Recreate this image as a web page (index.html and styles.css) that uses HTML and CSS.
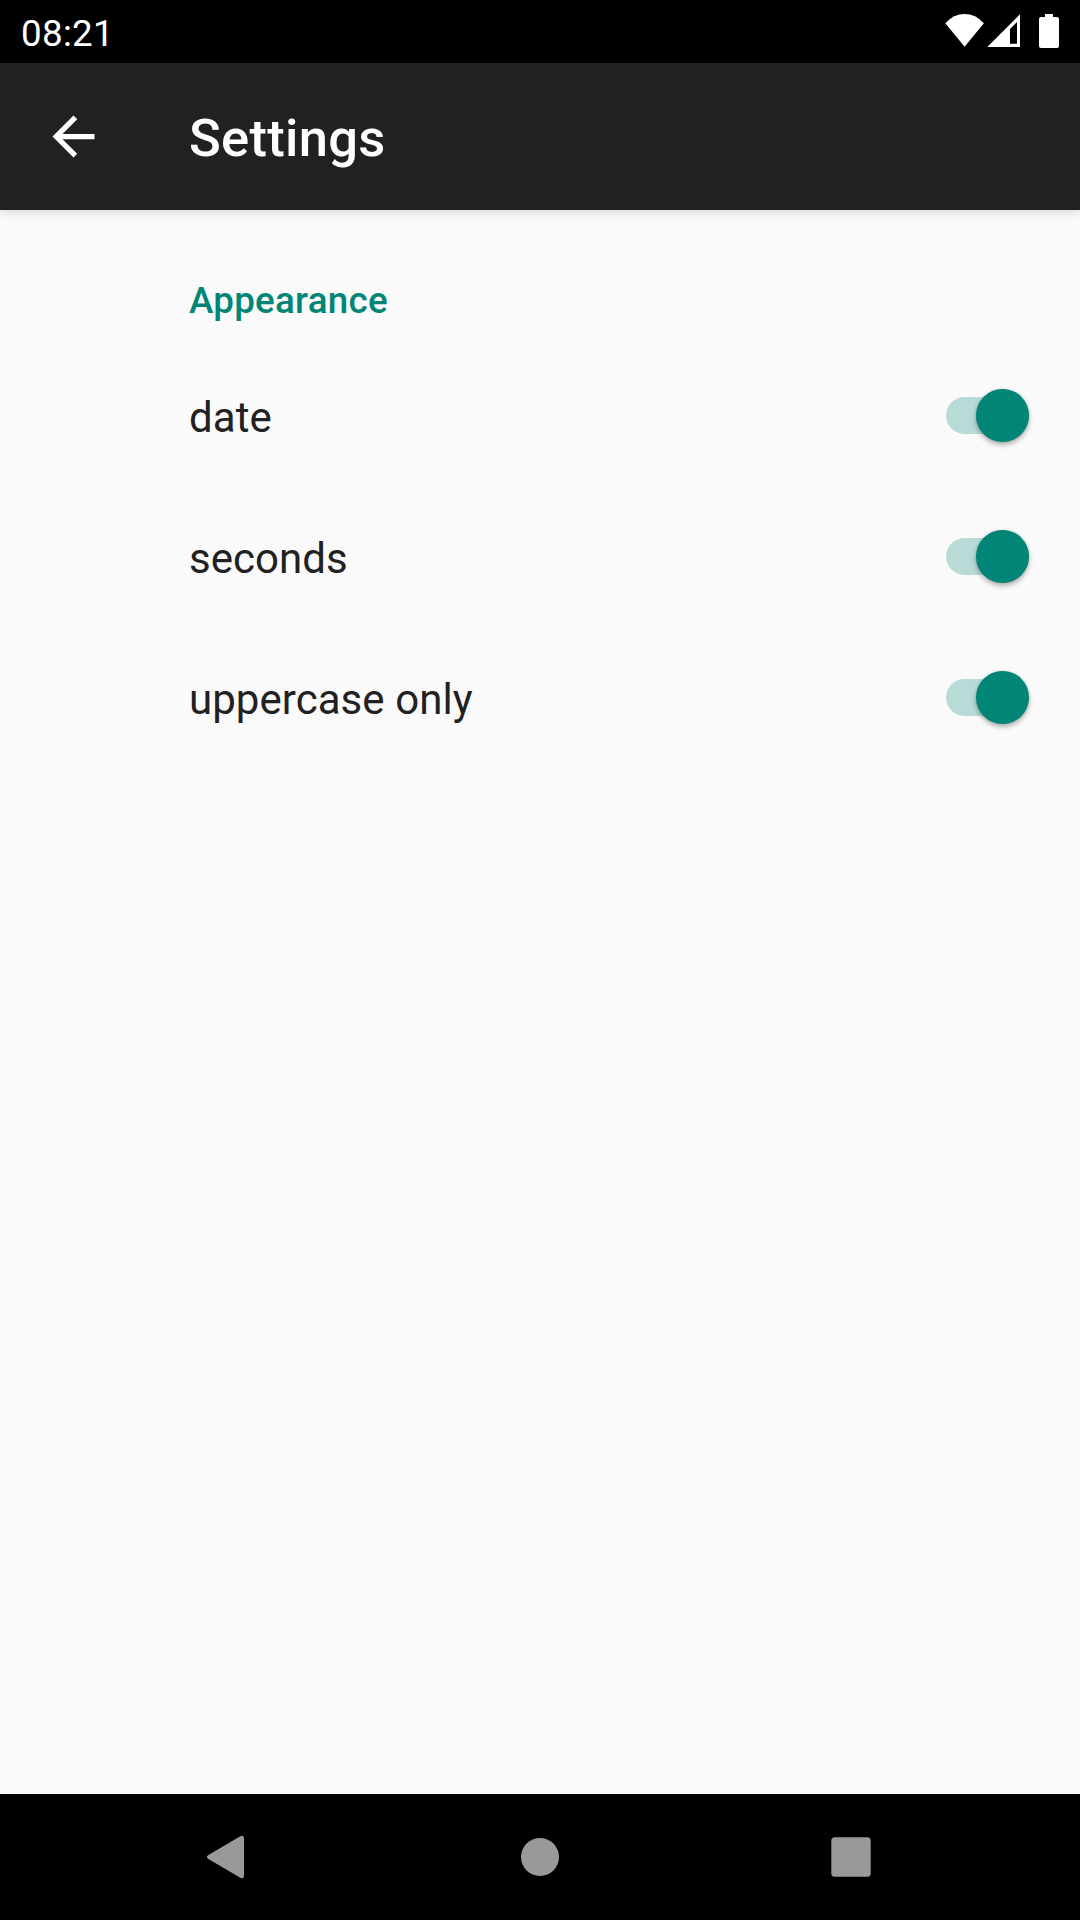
FILE: index.html
```html
<!DOCTYPE html>
<html lang="en">
<head>
<meta charset="utf-8">
<title>Settings</title>
<link rel="stylesheet" href="styles.css">
</head>
<body>
<div class="screen">
  <header class="status-bar">
    <span class="clock">08:21</span>
    <svg class="status-icons" width="116" height="36" viewBox="0 0 116 36" fill="#fff">
      <path d="M0.300 9.300Q8.600 0 19.600 0T38.900 9.300L19.600 32.800Z"/>
      <path fill-rule="evenodd" d="M42.300 33L75 0.300V33ZM65 15V29.800H72V8Z"/>
      <path d="M100 0h8v3h4a2 2 0 0 1 2 2v27a2 2 0 0 1-2 2H96a2 2 0 0 1-2-2V5a2 2 0 0 1 2-2h4Z"/>
    </svg>
  </header>
  <div class="app-bar">
    <svg class="back" width="63" height="63" viewBox="0 0 24 24" fill="#fff"><path d="M20 11H7.830l5.590-5.590L12 4l-8 8 8 8 1.410-1.410L7.830 13H20z"/></svg>
    <h1 class="title">Settings</h1>
  </div>
  <main class="content">
    <h2 class="category">Appearance</h2>
    <div class="row"><span class="label">date</span><span class="switch"><span class="thumb"></span></span></div>
    <div class="row"><span class="label">seconds</span><span class="switch"><span class="thumb"></span></span></div>
    <div class="row"><span class="label">uppercase only</span><span class="switch"><span class="thumb"></span></span></div>
  </main>
  <nav class="nav-bar">
    <svg width="42" height="46" viewBox="0 0 42 46" fill="#999"><path d="M2.400 21L34.300 2.300Q38 0.500 38 4.500V41.500Q38 45.500 34.300 43.700L2.400 25Q-0.600 23 2.400 21Z"/></svg>
    <svg width="42" height="42" viewBox="0 0 42 42" fill="#999"><circle cx="22" cy="21" r="19"/></svg>
    <svg width="42" height="42" viewBox="0 0 42 42" fill="#999"><rect x="1.300" y="1.300" width="39.400" height="39.400" rx="3.500"/></svg>
  </nav>
</div>
</body>
</html>
```
FILE: styles.css
```css
* { box-sizing: border-box; }
body {
  margin: 0;
  font-family: Roboto, "Liberation Sans", sans-serif;
  background: #fafafa;
}
svg { display: block; flex: none; }
.screen {
  width: 1080px;
  height: 1920px;
  display: flex;
  flex-direction: column;
}
.status-bar {
  height: 63px;
  padding: 0 19px 0 21px;
  background: #000;
  color: #fff;
  display: flex;
  justify-content: space-between;
}
.clock {
  padding-top: 3px;
  font-size: 36.75px;
  line-height: 61px;
  letter-spacing: 0.3px;
}
.status-icons { margin-top: 14px; }
.app-bar {
  height: 147px;
  padding-left: 42px;
  background: #212121;
  color: #fff;
  display: flex;
  align-items: center;
  gap: 84px;
  box-shadow: 0 2px 10px rgba(0, 0, 0, 0.14);
}
.title {
  margin: 0;
  padding-top: 3px;
  font-size: 52.5px;
  line-height: 62px;
  font-weight: 500;
  letter-spacing: 0.3px;
}
.content { flex: 1; }
.category {
  margin: 0;
  padding: 69px 0 22px 189px;
  font-size: 36.75px;
  line-height: 44px;
  font-weight: 500;
  letter-spacing: 0.25px;
  color: #008577;
}
.row {
  height: 141px;
  padding: 0 51px 0 189px;
  display: flex;
  align-items: center;
  justify-content: space-between;
}
.label {
  padding-top: 4px;
  font-size: 42px;
  line-height: 50px;
  letter-spacing: 0.05px;
  color: #212121;
}
.switch {
  width: 83px;
  height: 37px;
  padding-right: 0.5px;
  border-radius: 18.5px;
  background: #b8dbd7;
  display: flex;
  align-items: center;
  justify-content: flex-end;
}
.thumb {
  width: 52.5px;
  height: 52.5px;
  flex: none;
  border-radius: 50%;
  background: #008577;
  box-shadow: 0 3px 5px rgba(0, 0, 0, 0.28), 0 0 3px rgba(0, 0, 0, 0.12);
}
.nav-bar {
  height: 126px;
  padding: 0 208px 0 206px;
  background: #000;
  display: flex;
  align-items: center;
  justify-content: space-between;
}
```
